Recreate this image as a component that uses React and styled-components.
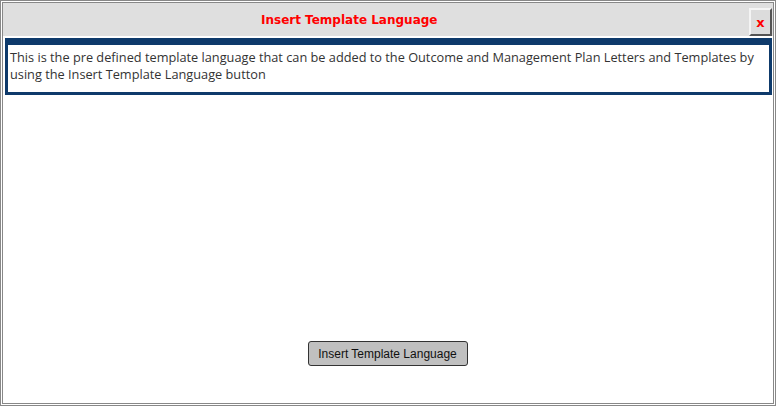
import React from 'react'
import styled, { createGlobalStyle } from 'styled-components'

const GlobalStyle = createGlobalStyle`
  html, body {
    margin: 0;
    padding: 0;
    background: #fff;
  }
  #root {
    width: 776px;
    height: 406px;
  }
`

const Dialog = styled.div`
  box-sizing: border-box;
  width: 776px;
  height: 406px;
  border: 3px double #888;
  display: flex;
  flex-direction: column;
  background: #fff;
`

const TitleBar = styled.div`
  height: 33px;
  background: #dfdfdf;
  display: flex;
  align-items: center;
  padding: 0 1px 0 258px;
`

const Title = styled.h1`
  flex: 1;
  margin: 0;
  font-family: 'DejaVu Sans', Verdana, sans-serif;
  font-size: 12px;
  font-weight: bold;
  color: #f00;
`

const CloseButton = styled.button`
  box-sizing: border-box;
  width: 23px;
  height: 28px;
  margin-top: 5px;
  padding: 0;
  background: #dcdcdc;
  border: 2px outset #f4f4f4;
  border-right-color: #a8a8a8;
  border-bottom-color: #a8a8a8;
  color: #f00;
  font-family: 'DejaVu Sans', Verdana, sans-serif;
  font-weight: bold;
  font-size: 13px;
  line-height: 1;
`

const Body = styled.div`
  flex: 1;
  display: flex;
  flex-direction: column;
  padding: 2px 1px 0 2px;
`

const InfoBox = styled.div`
  box-sizing: border-box;
  height: 57px;
  border: 3px solid #0e3a6b;
  border-top-width: 7px;
  padding: 4px 2px;
  font-family: 'Open Sans', 'Noto Sans', sans-serif;
  font-size: 12.75px;
  line-height: 17px;
  color: #333;
`

const Footer = styled.div`
  flex: 1;
  display: flex;
  justify-content: center;
  align-items: flex-end;
  padding: 0 2px 37px 0;
`

const ActionButton = styled.button`
  box-sizing: border-box;
  width: 160px;
  height: 25px;
  background: #c0c0c0;
  border: 1px solid #333;
  border-radius: 3px;
  font-family: 'Liberation Sans', Arial, sans-serif;
  font-size: 12px;
  color: #111;
  padding: 0;
`

export default function App() {
  return (
    <>
      <GlobalStyle />
      <Dialog>
        <TitleBar>
          <Title>Insert Template Language</Title>
          <CloseButton>x</CloseButton>
        </TitleBar>
        <Body>
          <InfoBox>
            This is the pre defined template language that can be added to the Outcome and Management Plan Letters and Templates by using the Insert Template Language button
          </InfoBox>
          <Footer>
            <ActionButton>Insert Template Language</ActionButton>
          </Footer>
        </Body>
      </Dialog>
    </>
  )
}
